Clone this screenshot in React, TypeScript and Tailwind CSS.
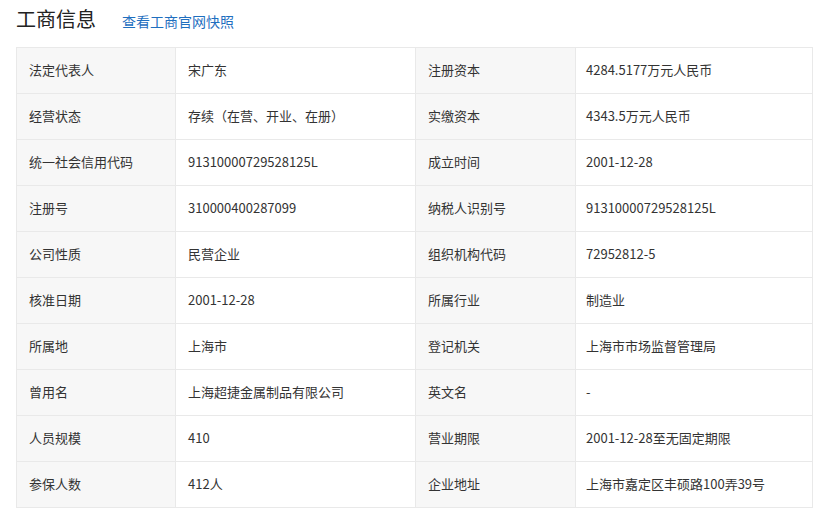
const rows: [string, string, string, string][] = [
  ["法定代表人", "宋广东", "注册资本", "4284.5177万元人民币"],
  ["经营状态", "存续（在营、开业、在册）", "实缴资本", "4343.5万元人民币"],
  ["统一社会信用代码", "91310000729528125L", "成立时间", "2001-12-28"],
  ["注册号", "310000400287099", "纳税人识别号", "91310000729528125L"],
  ["公司性质", "民营企业", "组织机构代码", "72952812-5"],
  ["核准日期", "2001-12-28", "所属行业", "制造业"],
  ["所属地", "上海市", "登记机关", "上海市市场监督管理局"],
  ["曾用名", "上海超捷金属制品有限公司", "英文名", "-"],
  ["人员规模", "410", "营业期限", "2001-12-28至无固定期限"],
  ["参保人数", "412人", "企业地址", "上海市嘉定区丰硕路100弄39号"],
];

export default function App() {
  return (
    <div className="w-[820px] h-[516px] bg-white text-[#333] px-4" style={{ fontFamily: '"Noto Sans CJK SC", "Noto Sans", sans-serif' }}>
      <div className="flex items-baseline h-[47px] pt-[4px]">
        <span className="text-[20px] text-[#222] leading-[30px]">工商信息</span>
        <span className="ml-[26px] text-[14px] text-[#1f6fbf]">查看工商官网快照</span>
      </div>
      <div className="w-[797px] border-t border-l border-[#e9e9e9] text-[13px]">
        {rows.map((r, i) => (
          <div key={i} className="flex h-[46px]">
            <div className="w-[159px] bg-[#f7f7f7] border-r border-b border-[#e9e9e9] flex items-center pl-3 pb-[2px]">{r[0]}</div>
            <div className="w-[240px] border-r border-b border-[#e9e9e9] flex items-center pl-3 pb-[2px]">{r[1]}</div>
            <div className="w-[160px] bg-[#f7f7f7] border-r border-b border-[#e9e9e9] flex items-center pl-3 pb-[2px]">{r[2]}</div>
            <div className="flex-1 border-r border-b border-[#e9e9e9] flex items-center pl-[10px] pb-[2px]">{r[3]}</div>
          </div>
        ))}
      </div>
    </div>
  );
}
